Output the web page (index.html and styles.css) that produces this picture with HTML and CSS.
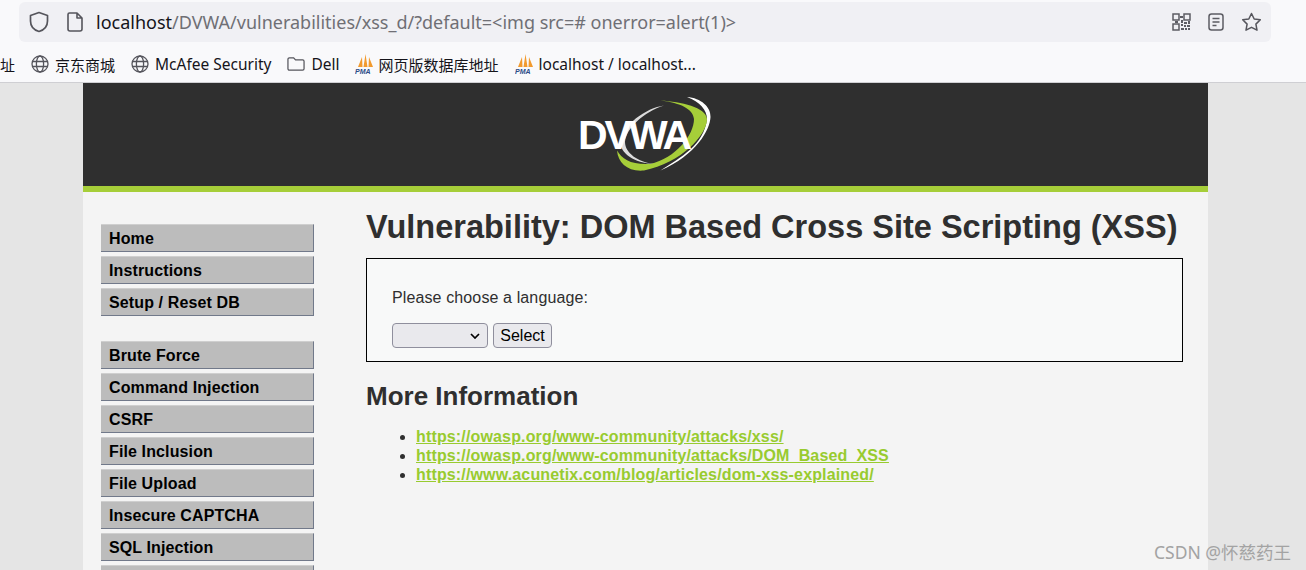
FILE: index.html
```html
<!DOCTYPE html>
<html lang="en">
<head>
    <meta charset="UTF-8">
    <title>Vulnerability: DOM Based Cross Site Scripting (XSS)</title>
    <link rel="stylesheet" href="styles.css">
</head>
<body>
    <div class="browser">
        <div class="toolbar">
            <div class="urlbar">
                <svg class="shield" width="20" height="22" viewBox="0 0 20 22"><path d="M10 1.5 L18.5 4.5 V10 C18.5 15 15 19 10 20.5 C5 19 1.5 15 1.5 10 V4.5 Z" fill="none" stroke="#55555c" stroke-width="1.7" stroke-linejoin="round"/></svg>
                <svg class="page-icon" width="16" height="20" viewBox="0 0 16 20"><path d="M2.5 1 H10 L15 6 V17 A2 2 0 0 1 13 19 H3 A2 2 0 0 1 1 17 V2.5 A1.5 1.5 0 0 1 2.5 1 Z M10 1 V6 H15" fill="none" stroke="#55555c" stroke-width="1.6" stroke-linejoin="round"/></svg>
                <span class="url"><b>localhost</b>/DVWA/vulnerabilities/xss_d/?default=&lt;img src=# onerror=alert(1)&gt;</span>
                <div class="url-actions">
                    <svg width="19" height="18" viewBox="0 0 19 18">
                        <g fill="none" stroke="#5c5c63" stroke-width="1.5"><rect x="1" y="1" width="6" height="6"/><rect x="12" y="1" width="6" height="6"/><rect x="1" y="11" width="6" height="6"/></g>
                        <path d="M8 3h3v2H8z M3 8h3v2H3z M9 7h2v3H9z M12 9h3v2h-3z M16 8h2v3h-2z M9 11h2v2H9z M12 12h2v2h-2z M15 12h3v2h-3z M9 15h3v2H9z M13 15h2v2h-2z M16 15h2v2h-2z" fill="#5c5c63"/>
                    </svg>
                    <svg width="16" height="18" viewBox="0 0 16 18"><rect x="1" y="1" width="14" height="16" rx="2.5" fill="none" stroke="#5c5c63" stroke-width="1.5"/><path d="M4.5 5.5h7M4.5 9h7M4.5 12.5h4" stroke="#5c5c63" stroke-width="1.4"/></svg>
                    <svg width="21" height="20" viewBox="0 0 21 20"><path d="M10.5 1.5 L13.2 7 L19.3 7.8 L14.9 12.1 L16 18.2 L10.5 15.3 L5 18.2 L6.1 12.1 L1.7 7.8 L7.8 7 Z" fill="none" stroke="#55555c" stroke-width="1.5" stroke-linejoin="round"/></svg>
                </div>
            </div>
        </div>
        <div class="bookmarks">
            <span class="bm cjk">址</span>
            <span class="bm cjk"><svg class="globe" width="18" height="18" viewBox="0 0 18 18"><g fill="none" stroke="#55555c" stroke-width="1.3"><circle cx="9" cy="9" r="8"/><ellipse cx="9" cy="9" rx="3.6" ry="8"/><path d="M1.5 6.5h15M1.5 11.5h15"/></g></svg>京东商城</span>
            <span class="bm"><svg class="globe" width="18" height="18" viewBox="0 0 18 18"><g fill="none" stroke="#55555c" stroke-width="1.3"><circle cx="9" cy="9" r="8"/><ellipse cx="9" cy="9" rx="3.6" ry="8"/><path d="M1.5 6.5h15M1.5 11.5h15"/></g></svg>McAfee Security</span>
            <span class="bm"><svg width="18" height="16" viewBox="0 0 19 16"><path d="M1 3 A1.5 1.5 0 0 1 2.5 1.5 H7 L9 3.7 H16.5 A1.5 1.5 0 0 1 18 5.2 V13 A1.5 1.5 0 0 1 16.5 14.5 H2.5 A1.5 1.5 0 0 1 1 13 Z" fill="none" stroke="#55555c" stroke-width="1.3"/></svg>Dell</span>
            <span class="bm cjk bm-tight"><svg class="pma" width="20" height="20" viewBox="0 0 20 20"><path d="M3 13 L7 3 L7.5 13 Z M8.5 13 L10.5 0 L12.5 13 Z M13.5 13 L14 3 L18 13 Z" fill="#f29a2e"/><text x="0" y="19.5" class="pma-text">PMA</text></svg>网页版数据库地址</span>
            <span class="bm"><svg class="pma" width="20" height="20" viewBox="0 0 20 20"><path d="M3 13 L7 3 L7.5 13 Z M8.5 13 L10.5 0 L12.5 13 Z M13.5 13 L14 3 L18 13 Z" fill="#f29a2e"/><text x="0" y="19.5" class="pma-text">PMA</text></svg>localhost / localhost...</span>
        </div>
    </div>

    <div class="container">
        <div class="header">
            <svg class="logo" width="140" height="80" viewBox="0 0 140 80">
                <path d="M111 2 C125 3 135 12 134.5 22 C134 35 120 60 84.5 75.5 C105 62 128 50 131 24 C131 15 124 7 111 2 Z" fill="#fff"/>
                <path d="M84.5 5.5 C105 7 130 12 131 24 C131 40 105 68 68 75.5 C52 77 42 68 41 55.5 C46 64 55 70 74 69 C100 63 118 40 118 24 C117 14 105 8 84.5 5.5 Z" fill="#a6ce39"/>
                <path d="M88 10.5 C70 13 46 30 44.5 47 C44 58 58 68 78 69 C62 67 49 58 49 47 C50 33 68 17 88 10.5 Z" fill="#dcdcdc"/>
                <text x="2" y="53.5" class="logo-text">DVWA</text>
            </svg>
        </div>
        <div class="content">
            <nav class="sidebar">
                <ul class="menu">
                    <li>Home</li>
                    <li>Instructions</li>
                    <li>Setup / Reset DB</li>
                </ul>
                <ul class="menu">
                    <li>Brute Force</li>
                    <li>Command Injection</li>
                    <li>CSRF</li>
                    <li>File Inclusion</li>
                    <li>File Upload</li>
                    <li>Insecure CAPTCHA</li>
                    <li>SQL Injection</li>
                    <li></li>
                </ul>
            </nav>
            <div class="main">
                <h1>Vulnerability: DOM Based Cross Site Scripting (XSS)</h1>
                <div class="vulnerable">
                    <p>Please choose a language:</p>
                    <form class="lang-form">
                        <select class="lang"><option></option></select>
                        <input class="submit" type="button" value="Select">
                    </form>
                </div>
                <h2>More Information</h2>
                <ul class="links">
                    <li><a href="#">https://owasp.org/www-community/attacks/xss/</a></li>
                    <li><a href="#">https://owasp.org/www-community/attacks/DOM_Based_XSS</a></li>
                    <li><a href="#">https://www.acunetix.com/blog/articles/dom-xss-explained/</a></li>
                </ul>
            </div>
        </div>
    </div>

    <div class="watermark">CSDN @怀慈药王</div>
</body>
</html>
```

FILE: styles.css
```css
html, body {
    margin: 0;
    height: 570px;
    overflow: hidden;
}

body {
    font-family: "Liberation Sans", Arial, sans-serif;
    background-color: #e5e5e5;
    position: relative;
}

/* browser bars */
.browser {
    height: 82px;
    background-color: #f9f9fb;
    border-bottom: 1px solid #cfcfd3;
    font-family: "Noto Sans", "Noto Sans CJK SC", sans-serif;
}

.toolbar {
    height: 46px;
    padding: 2px 35px 0 19px;
    box-sizing: border-box;
}

.urlbar {
    height: 40px;
    background-color: #f0f0f4;
    border-radius: 6px;
    display: flex;
    align-items: center;
    padding: 0 9px 0 10px;
}

.shield {
    margin-right: 18px;
}

.page-icon {
    margin-right: 13px;
}

.url {
    font-size: 18px;
    color: #6f6f75;
    white-space: nowrap;
}

.url b {
    font-weight: 400;
    color: #15141a;
}

.url-actions {
    margin-left: auto;
    display: flex;
    align-items: center;
    gap: 17px;
}

.bookmarks {
    height: 36px;
    display: flex;
    align-items: center;
    gap: 16px;
    font-size: 15.5px;
    color: #15141a;
    white-space: nowrap;
    overflow: hidden;
}

.bm {
    display: flex;
    align-items: center;
    gap: 6px;
}

.bm-tight {
    margin-left: -1px;
}

.cjk {
    font-size: 15px;
}

.pma {
    margin-right: -2px;
}

.pma-text {
    font: italic bold 7px "Liberation Sans", sans-serif;
    fill: #2c4a86;
}

/* dvwa page */
.container {
    width: 1125px;
    margin-left: 83px;
    background-color: #f4f4f4;
    height: 487px;
    overflow: hidden;
}

.header {
    height: 103px;
    background-color: #2f2f2f;
    border-bottom: 6px solid #a6ce39;
    display: flex;
    justify-content: center;
    align-items: center;
}

.logo-text {
    font: bold 41px "Liberation Sans", sans-serif;
    fill: #fff;
    letter-spacing: -3px;
}

.content {
    display: flex;
}

.sidebar {
    width: 213px;
    margin-left: 18px;
    padding-top: 32px;
    flex-shrink: 0;
}

.menu {
    list-style: none;
    margin: 0 0 25px;
    padding: 0;
}

.menu li {
    height: 28px;
    line-height: 28px;
    box-sizing: border-box;
    margin-bottom: 4px;
    padding-left: 8px;
    background-color: #bcbcbc;
    border-top: 1px solid #cfcfcf;
    border-right: 1px solid #71798a;
    border-bottom: 1px solid #71798a;
    font-size: 16px;
    letter-spacing: 0.12px;
    font-weight: bold;
    color: #000;
}

.main {
    margin-left: 52px;
    width: 817px;
}

h1 {
    margin: 17px 0 0;
    font-size: 32.5px;
    line-height: 37px;
    font-weight: bold;
    color: #2f2f2f;
    white-space: nowrap;
}

.vulnerable {
    margin-top: 12px;
    height: 104px;
    box-sizing: border-box;
    background-color: #f8f9f9;
    border: 1px solid #000;
    padding: 29px 25px 0;
    font-size: 16px;
    letter-spacing: 0.12px;
    color: #2f2f2f;
}

.vulnerable p {
    margin: 0 0 15px;
    line-height: 20px;
}

.lang-form {
    display: flex;
    gap: 5px;
}

.lang, .submit {
    height: 25px;
    box-sizing: border-box;
    background-color: #e9e9ed;
    border: 1px solid #8f8f9d;
    border-radius: 4px;
    font-family: "Liberation Sans", sans-serif;
    font-size: 16px;
    color: #000;
}

.lang {
    width: 96px;
    appearance: none;
    background-image: url("data:image/svg+xml,%3Csvg xmlns='http://www.w3.org/2000/svg' width='10' height='6'%3E%3Cpath d='M1 1l4 4 4-4' fill='none' stroke='%23000' stroke-width='1.7'/%3E%3C/svg%3E");
    background-repeat: no-repeat;
    background-position: 77px 9px;
}

.submit {
    width: 59px;
    padding: 0;
}

h2 {
    margin: 19px 0 0;
    font-size: 26px;
    line-height: 31px;
    font-weight: bold;
    color: #2f2f2f;
}

.links {
    margin: 15px 0 0;
    padding-left: 50px;
    font-size: 16px;
    line-height: 19px;
    color: #2f2f2f;
}

.links a {
    font-weight: bold;
    letter-spacing: 0.15px;
    color: #98cb2f;
}

.watermark {
    position: absolute;
    right: 15px;
    bottom: 6px;
    font-family: "Noto Sans", "Noto Sans CJK SC", sans-serif;
    font-size: 17.5px;
    color: #a3a3a3;
}
```
